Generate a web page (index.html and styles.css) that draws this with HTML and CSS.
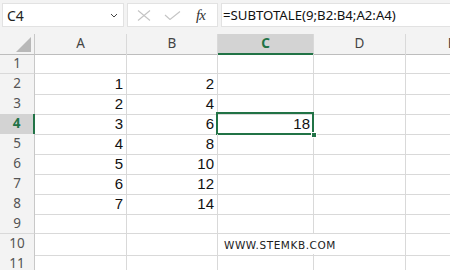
FILE: index.html
```html
<!DOCTYPE html>
<html lang="it">
<head>
    <meta charset="UTF-8">
    <title>Foglio di calcolo</title>
    <link rel="stylesheet" href="styles.css">
</head>
<body>
    <!-- Barra della formula -->
    <div class="formula-bar">
        <div class="name-box">
            <span>C4</span>
            <svg class="chevron" width="8" height="5" viewBox="0 0 8 5"><path d="M1 1 L4 4 L7 1" fill="none" stroke="#444" stroke-width="1"/></svg>
        </div>
        <div class="fx-tools">
            <svg class="tool" width="14" height="11" viewBox="0 0 14 11"><path d="M1 0.5 L13 10.5 M13 0.5 L1 10.5" stroke="#c4c4c4" stroke-width="1.1" fill="none"/></svg>
            <svg class="tool" width="17" height="9" viewBox="0 0 17 9"><path d="M1 4 L6 8.5 L16 0.5" stroke="#c4c4c4" stroke-width="1.1" fill="none"/></svg>
            <span class="fx">fx</span>
        </div>
        <div class="formula-input">=SUBTOTALE(9;B2:B4;A2:A4)</div>
    </div>

    <!-- Griglia -->
    <div class="sheet">
        <div class="row head">
            <div class="corner"><span class="triangle"></span></div>
            <div class="col-head">A</div>
            <div class="col-head">B</div>
            <div class="col-head active">C</div>
            <div class="col-head">D</div>
            <div class="col-head">E</div>
        </div>
        <div class="row"><div class="row-head">1</div><div class="cell"></div><div class="cell"></div><div class="cell"></div><div class="cell"></div><div class="cell"></div></div>
        <div class="row"><div class="row-head">2</div><div class="cell num">1</div><div class="cell num">2</div><div class="cell"></div><div class="cell"></div><div class="cell"></div></div>
        <div class="row"><div class="row-head">3</div><div class="cell num">2</div><div class="cell num">4</div><div class="cell"></div><div class="cell"></div><div class="cell"></div></div>
        <div class="row"><div class="row-head active">4</div><div class="cell num">3</div><div class="cell num">6</div><div class="cell num selected">18<span class="handle"></span></div><div class="cell"></div><div class="cell"></div></div>
        <div class="row"><div class="row-head">5</div><div class="cell num">4</div><div class="cell num">8</div><div class="cell"></div><div class="cell"></div><div class="cell"></div></div>
        <div class="row"><div class="row-head">6</div><div class="cell num">5</div><div class="cell num">10</div><div class="cell"></div><div class="cell"></div><div class="cell"></div></div>
        <div class="row"><div class="row-head">7</div><div class="cell num">6</div><div class="cell num">12</div><div class="cell"></div><div class="cell"></div><div class="cell"></div></div>
        <div class="row"><div class="row-head">8</div><div class="cell num">7</div><div class="cell num">14</div><div class="cell"></div><div class="cell"></div><div class="cell"></div></div>
        <div class="row"><div class="row-head">9</div><div class="cell"></div><div class="cell"></div><div class="cell"></div><div class="cell"></div><div class="cell"></div></div>
        <div class="row"><div class="row-head">10</div><div class="cell"></div><div class="cell"></div><div class="cell overflow"><span class="site">WWW.STEMKB.COM</span></div><div class="cell"></div><div class="cell"></div></div>
        <div class="row"><div class="row-head">11</div><div class="cell"></div><div class="cell"></div><div class="cell"></div><div class="cell"></div><div class="cell"></div></div>
    </div>
</body>
</html>
```

FILE: styles.css
```css
/* Variabili */
:root {
    --green: #217346;
    --bar-bg: #f3f3f3;
    --head-bg: #f3f3f3;
    --head-active: #d3d3d3;
    --grid: #d9d9d9;
    --head-line: #c8c8c8;
}

* {
    margin: 0;
    padding: 0;
    box-sizing: border-box;
}

body {
    background: #ffffff;
    font-family: 'Liberation Sans', Arial, sans-serif;
    width: 450px;
    height: 270px;
    overflow: hidden;
}

/* Barra della formula */
.formula-bar {
    height: 34px;
    background: var(--bar-bg);
    display: flex;
    align-items: flex-start;
    padding: 3px 0 0 2px;
    gap: 3px;
}

.name-box {
    width: 122px;
    height: 24px;
    background: #fff;
    border: 1px solid #e2e2e2;
    display: flex;
    align-items: center;
    justify-content: space-between;
    padding: 0 5px 0 4px;
    font-family: 'Noto Sans', sans-serif;
    font-size: 14px;
    color: #222;
}

.fx-tools {
    width: 91px;
    height: 24px;
    background: #fff;
    border: 1px solid #e2e2e2;
    display: flex;
    align-items: center;
    padding: 0 0 0 9px;
}

.tool:first-child {
    margin-right: 13px;
}

.fx {
    font-family: 'Liberation Serif', serif;
    font-style: italic;
    font-size: 15px;
    color: #333;
    margin-left: 15px;
    letter-spacing: -1px;
}

.formula-input {
    flex: 1;
    height: 24px;
    background: #fff;
    border: 1px solid #e2e2e2;
    border-right: none;
    padding: 0 0 0 1px;
    line-height: 22px;
    font-family: 'Noto Sans', sans-serif;
    font-size: 13.2px;
    color: #111;
}

/* Griglia */
.sheet {
    overflow: hidden;
}

.row {
    display: grid;
    grid-template-columns: 35px 92px 91px 96px 92px 92px;
    height: 20px;
}

.row > div {
    border-right: 1px solid var(--grid);
    border-bottom: 1px solid var(--grid);
}

.head > div {
    background: var(--head-bg);
    border-bottom-color: #bdbdbd;
    text-align: center;
    font-family: 'Noto Sans', sans-serif;
    font-size: 13.5px;
    line-height: 19px;
    color: #444;
}

.corner {
    position: relative;
    border-right-color: var(--head-line) !important;
}

.triangle {
    position: absolute;
    right: 3px;
    bottom: 2px;
    width: 0;
    height: 0;
    border-left: 15px solid transparent;
    border-bottom: 15px solid #b8b8b8;
}

.col-head.active {
    background: var(--head-active);
    color: var(--green);
    font-weight: 700;
    border-bottom: 2px solid var(--green);
}

.row-head {
    background: var(--head-bg);
    border-right-color: var(--head-line) !important;
    text-align: center;
    font-family: 'Noto Sans', sans-serif;
    font-size: 13.5px;
    line-height: 19px;
    color: #555;
}

.row-head.active {
    background: var(--head-active);
    color: var(--green);
    font-weight: 700;
    border-right: 2px solid var(--green) !important;
}

.cell {
    font-size: 15px;
    line-height: 20px;
    color: #111;
    position: relative;
}

.num {
    text-align: right;
    padding-right: 3px;
}

.selected::after {
    content: '';
    position: absolute;
    top: -2px;
    left: -2px;
    right: -1px;
    bottom: -1px;
    border: 2px solid var(--green);
    pointer-events: none;
}

.handle {
    position: absolute;
    right: -4px;
    bottom: -4px;
    width: 6px;
    height: 6px;
    background: var(--green);
    border: 1px solid #fff;
    z-index: 2;
}

.overflow {
    border-right-color: transparent !important;
    white-space: nowrap;
}

.site {
    position: relative;
    z-index: 1;
    padding-left: 6px;
    font-family: 'DejaVu Sans', sans-serif;
    font-size: 10.5px;
    letter-spacing: 0.55px;
    color: #222;
    line-height: 20px;
}
```
